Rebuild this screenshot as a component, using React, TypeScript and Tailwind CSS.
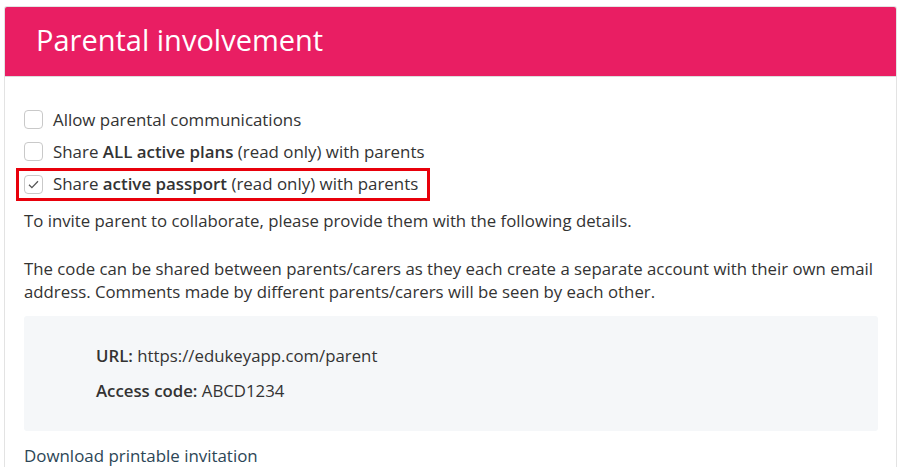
import React from "react";

type TOption = {
  id: string;
  checked: boolean;
  highlight?: boolean;
  label: React.ReactNode;
};

const options: TOption[] = [
  { id: "comms", checked: false, label: <>Allow parental communications</> },
  {
    id: "plans",
    checked: false,
    label: (
      <>
        Share <b className="font-semibold">ALL active plans</b> (read only) with parents
      </>
    ),
  },
  {
    id: "passport",
    checked: true,
    highlight: true,
    label: (
      <>
        Share <b className="font-semibold">active passport</b> (read only) with parents
      </>
    ),
  },
];

const Checkbox = ({ checked }: { checked: boolean }) => (
  <span className="flex h-[19px] w-[19px] shrink-0 items-center justify-center rounded-[4px] border border-[#c9c9c9] bg-white">
    {checked && (
      <svg width="11" height="9" viewBox="0 0 11 9" fill="none">
        <path d="M1 4.8L3.9 7.6L10 1.2" stroke="#555" strokeWidth="1.3" />
      </svg>
    )}
  </span>
);

const App = () => {
  return (
    <div
      className="min-h-[475px] bg-white pt-[6px] pl-[4px] text-[#333]"
      style={{ fontFamily: '"Open Sans", "Noto Sans", sans-serif' }}
    >
      <div className="w-[893px] overflow-hidden rounded-t-[3px] border-x border-t border-[#e3e3e3]">
        <div className="flex h-[69px] items-center bg-[#e91e63] px-[31px] pb-[4px]">
          <h1 className="text-[29px] leading-none text-white">Parental involvement</h1>
        </div>
        <div className="border-t border-[#dcdcdc] pt-[27px] pl-[19px] pr-[18px]">
          <ul className="flex flex-col">
            {options.map((o) => (
              <li key={o.id} className="flex h-[32px] items-center">
                <div
                  className={
                    o.highlight
                      ? "-ml-[8px] flex h-[33px] items-center gap-[10px] border-[3px] border-[#e8000b] pl-[5px] pr-[9px]"
                      : "flex items-center gap-[10px]"
                  }
                >
                  <Checkbox checked={o.checked} />
                  <span className="text-[16.9px]">{o.label}</span>
                </div>
              </li>
            ))}
          </ul>
          <p className="mt-[9px] text-[16.8px] leading-[23px]">
            To invite parent to collaborate, please provide them with the following details.
          </p>
          <p className="mt-[25px] text-[16.8px] leading-[23px]">
            The code can be shared between parents/carers as they each create a separate account with their own email
            address. Comments made by different parents/carers will be seen by each other.
          </p>
          <div className="mt-[13px] flex h-[115px] flex-col justify-center gap-[11px] rounded-[3px] bg-[#f5f7f9] pl-[72px] text-[16.8px] leading-[24px]">
            <div>
              <b className="font-semibold">URL:</b> https://edukeyapp.com/parent
            </div>
            <div>
              <b className="font-semibold">Access code:</b> ABCD1234
            </div>
          </div>
          <div className="mt-[13px] text-[16.9px] leading-[23px] text-[#2c4656]">Download printable invitation</div>
        </div>
      </div>
    </div>
  );
};

export default App;
